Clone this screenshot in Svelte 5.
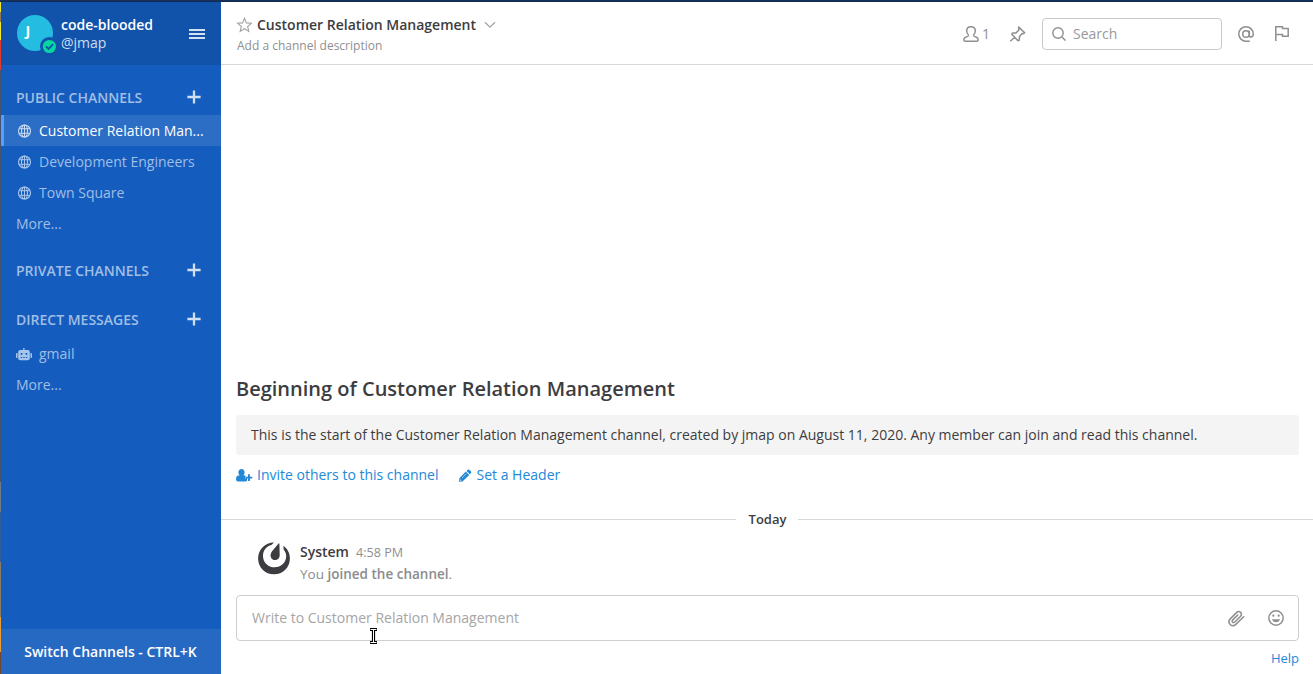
<script>
  const publicChannels = [
    { name: 'Customer Relation Man...', active: true },
    { name: 'Development Engineers', active: false },
    { name: 'Town Square', active: false }
  ];
</script>

{#snippet addIcon()}
  <svg class="add" width="14" height="14" viewBox="0 0 14 14"><path d="M7 .4v13.200M.4 7h13.200" stroke="currentColor" stroke-width="2.300" /></svg>
{/snippet}

<div class="window">
  <div class="topbar"></div>
  <div class="edge"></div>

  <aside class="sidebar">
    <header class="team">
      <svg class="avatar" width="42" height="40" viewBox="0 0 42 40">
        <circle cx="18" cy="18" r="18" fill="#25bce1" />
        <text x="8.4" y="21.400" fill="#fff" font-size="14.500" font-weight="700">J</text>
        <circle cx="32.4" cy="31.5" r="9.4" fill="#1153ab" />
        <circle cx="32.4" cy="31.5" r="6.6" fill="#06d6a0" />
        <path d="M29 31.4l2.500 2.500 4.600-4.700" fill="none" stroke="#1153ab" stroke-width="1.800" />
      </svg>
      <div class="who">
        <div class="teamname">code-blooded</div>
        <div class="username">@jmap</div>
      </div>
      <svg class="menu" width="16" height="10" viewBox="0 0 16 10"><path d="M0 1h16M0 5h16M0 9h16" stroke="#d5e1f1" stroke-width="2" /></svg>
    </header>

    <nav>
      <h4 class="first"><span>PUBLIC CHANNELS</span>{@render addIcon()}</h4>
      {#each publicChannels as channel}
        <div class="row" class:active={channel.active}>
          <svg class="globe" width="14" height="14" viewBox="0 0 14 14" fill="none" stroke="currentColor" stroke-width="1.1">
            <circle cx="7.500" cy="7" r="6" />
            <ellipse cx="7.500" cy="7" rx="3" ry="6" />
            <path d="M7.500 1v12M2.100 4.700h10.800M2.100 9.300h10.800" stroke-width="1" />
          </svg>
          <span class="name">{channel.name}</span>
        </div>
      {/each}
      <div class="row more">More...</div>

      <h4 class="private"><span>PRIVATE CHANNELS</span>{@render addIcon()}</h4>

      <h4 class="direct"><span>DIRECT MESSAGES</span>{@render addIcon()}</h4>
      <div class="row">
        <svg class="globe bot" width="16" height="13" viewBox="0 0 16 13">
          <path fill="currentColor" fill-rule="evenodd" d="M7.200 0h1.300v2H11.700q2.100 0 2.100 2v6.200q0 2-2.100 2H4.300q-2.100 0-2.100-2V4Q2.200 2 4.300 2h2.900zM4.700 5v1.800h1.800V5zM9.500 5v1.800h1.800V5zM4.600 9v1h1.600V9zM7.200 9v1h1.600V9zM9.800 9v1h1.600V9zM0 5.800q0-.8.800-.8h.7v5h-.7Q0 10 0 9.200zM14.500 5h.7q.8 0 .8.8v3.400q0 .8-.8.8h-.7z" />
        </svg>
        <span class="name">gmail</span>
      </div>
      <div class="row more">More...</div>
    </nav>

    <footer class="switch">Switch Channels - CTRL+K</footer>
  </aside>

  <main>
    <header class="channel">
      <div class="about">
        <div class="title">
          <svg width="16" height="16" viewBox="0 0 16 16"><path d="M8.500 1.300l1.900 4.600 5 .4-3.800 3.200 1.200 4.900-4.300-2.700-4.300 2.700 1.200-4.900L1.600 6.300l5-.4z" fill="none" stroke="#a3a3a5" stroke-width="1.100" /></svg>
          <span class="heading">Customer Relation Management</span>
          <svg class="caret" width="12" height="8" viewBox="0 0 12 8"><path d="M1 1.200l5 5 5-5" fill="none" stroke="#a3a3a5" stroke-width="1.300" /></svg>
        </div>
        <div class="description">Add a channel description</div>
      </div>
      <div class="members">
        <svg width="16" height="16" viewBox="0 0 16 16" fill="none" stroke="currentColor" stroke-width="1.500">
          <path d="M5.700 9.300C4.300 8 3.600 6.300 3.700 4.600 3.800 2.200 5.500.8 8 .8s4.200 1.400 4.300 3.800c.1 1.700-.6 3.400-2 4.700M5.700 9.300c-.2 1-1.700 1.300-3.200 2C1.400 11.800.9 12.700.9 14q0 1.200 1.200 1.200h11.800q1.200 0 1.200-1.200c0-1.300-.5-2.200-1.600-2.700-1.500-.7-3-1-3.200-2" />
        </svg>
        <span>1</span>
      </div>
      <svg class="pin" width="17" height="16" viewBox="0 0 17 16" fill="none" stroke="#8f8f91" stroke-width="1.500" stroke-linejoin="round">
        <path d="M9.700 1.100l6 5.700-1.400.9-1.200-.1-2.600 2.900-.2 3.600-1.300.6-6.300-6.400.8-1.200 3.500-.2 2.800-2.700-.2-1.900zM5.700 11.200L1.300 15.300" />
      </svg>
      <div class="search">
        <svg width="14" height="14" viewBox="0 0 14 14"><path d="M10.200 10.200L13.500 13.500" stroke="#8f8f91" stroke-width="1.500" /><circle cx="6" cy="6" r="5.200" fill="none" stroke="#8f8f91" stroke-width="1.400" /></svg>
        <span>Search</span>
      </div>
      <svg class="at" width="16" height="16" viewBox="0 0 16 16" fill="none" stroke="#8f8f91" stroke-width="1.500">
        <circle cx="8" cy="8" r="3.300" />
        <path d="M11.300 4.400v4.800c0 1.200.7 1.800 1.700 1.800 1.500 0 2.200-1.300 2.200-3C15.200 4 12.200.8 8 .8S.8 4 .8 8 4 15.200 8 15.200h3.800" />
      </svg>
      <svg class="flag" width="14" height="15" viewBox="0 0 14 15" fill="none" stroke="#8f8f91" stroke-width="1.500">
        <path d="M.8 15V.8h6.700v1.700h5.700v7.700H7.500V8.600H.8" />
      </svg>
    </header>

    <section class="intro">
      <h1>Beginning of Customer Relation Management</h1>
      <p>This is the start of the Customer Relation Management channel, created by jmap on August 11, 2020. Any member can join and read this channel.</p>
      <div class="links">
        <svg width="16" height="13" viewBox="0 0 16 13"><path fill="currentColor" d="M5.500 0C7.300 0 8.600 1.300 8.600 3.200 8.600 4.700 7.900 5.800 7.200 6.400L8.600 6.300Q9.200 6.300 9.500 6.800V9.500H11v2.300Q10.300 12.400 9.300 12.400H1.700Q0 12.400 0 10.600C0 8.500.6 6.500 2.200 6.400L3.800 6.400C3 5.800 2.400 4.700 2.400 3.200 2.400 1.300 3.700 0 5.500 0zM12 5.200h1.900v2.500H16.300v1.900h-2.400v2.500H12V9.600H10V7.700h2z" /></svg>
        <span class="invite">Invite others to this channel</span>
        <svg width="13" height="13" viewBox="0 0 13 13"><path fill="currentColor" d="M8.700.8q.8-.8 1.600 0l1.700 1.700q.8.800 0 1.600L10.800 5.300 7.500 2zM6.800 2.600l3.400 3.400-6.700 6.500L0 12.800l.4-3.600zM1.200 10.200l-.2 1.500 1.500-.2z" fill-rule="evenodd" /><path d="M3 9l4.300-4.300" stroke="#fff" stroke-width=".5" /></svg>
        <span class="set">Set a Header</span>
      </div>
    </section>

    <div class="today"><i></i><span>Today</span><i></i></div>

    <article>
      <svg class="logo" width="32" height="33" viewBox="0 0 32 33">
        <path fill="#3d3c40" d="M16 .5C7 .6.100 7.600.100 16.400c0 9 7 15.900 15.900 15.900s15.900-7 15.900-15.900c0-5.400-2.500-9.900-6.500-12.700l.2 3.700c1.900 2.200 2.700 4.500 2.600 7.200-.2 6.400-5.300 10.700-11.500 10.700C10 25.300 5 20.300 5 13.900 5 8.200 8.500 4.200 13.700 2.700z" />
        <path fill="#3d3c40" d="M20.800 1.300q.5-.1.600.4l.3 11.200c.1 3-2.100 5.200-4.800 5.100-3-.1-4.900-2.900-4.200-5.800.4-1.600 1.100-2.500 2-3.700z" />
      </svg>
      <div class="post">
        <div class="sender"><b>System</b><time>4:58 PM</time></div>
        <div class="message">You <b>joined the channel</b>.</div>
      </div>
    </article>

    <div class="composer">
      <span>Write to Customer Relation Management</span>
      <svg class="clip" width="17" height="17" viewBox="0 0 17 17" fill="none" stroke="#8f8f91" stroke-width="1.500" stroke-linecap="round">
        <path d="M15.700 6.800l-7.600 7.300c-2 1.900-4.400 1.900-5.900.4-1.600-1.600-1.600-4 .3-5.900l6-6c1.300-1.300 3-1.300 4.100-.2s1.100 2.800-.2 4.100l-5.600 5.500c-.8.800-1.600.8-2.200.2s-.6-1.500.2-2.300l4.900-4.800" />
      </svg>
      <svg width="16" height="16" viewBox="0 0 16 16"><circle cx="8" cy="8" r="7.200" fill="none" stroke="#8f8f91" stroke-width="1.500" /><circle cx="5.300" cy="5.700" r="1.100" fill="#8f8f91" /><circle cx="10.700" cy="5.700" r="1.100" fill="#8f8f91" /><path d="M4 9.300h8c-.5 2-2 3-4 3s-3.500-1-4-3z" fill="#8f8f91" /></svg>
    </div>
    <div class="help">Help</div>
  </main>

  <svg class="cursor" width="9" height="18" viewBox="0 0 9 18">
    <path d="M1 2.500h7M4.500 2.500v13M1 15.500h7" fill="none" stroke="#000" stroke-width="3.200" />
    <path d="M1.500 2.500h6M4.500 2.500v13M1.500 15.500h6" fill="none" stroke="#fff" stroke-width="1" />
  </svg>
</div>

<style>
  :global(body) { margin: 0; background: #fff; }
  .window {
    position: relative;
    display: grid;
    grid-template: 2px 672px / 1px 220px 1092px;
    width: 1313px;
    height: 674px;
    overflow: hidden;
    font: 14px/20px 'Open Sans', sans-serif;
    color: #3d3c40;
    white-space: nowrap;
  }
  svg { display: block; flex: none; }
  .topbar { grid-column: 1 / 4; background: linear-gradient(#18345f, #0e2850); }
  .edge { background: linear-gradient(#f5e628 0 10px, #8d7a50 10px 20px, #f5e628 20px 38px, #e23a2d 38px 68px, #44536e 68px 480px, #737a82 480px 510px, #315e97 510px 560px, #8c7b61 560px 615px, #eb9c31 615px 650px, #754432 650px); }

  .sidebar { display: flex; flex-direction: column; background: #145dbf; color: #a1bee5; }
  .team { display: flex; box-sizing: border-box; height: 63px; padding: 13px 0 0 16px; background: #1153ab; }
  .who { width: 128px; margin-left: 2px; }
  .teamname { color: #fff; font-weight: 600; line-height: 18px; margin-top: 1px; }
  .username { color: #cfddee; line-height: 18px; }
  .menu { margin-top: 14px; }
  nav { flex: 1; }
  h4 { display: flex; align-items: center; justify-content: space-between; height: 20px; margin: 0; padding: 0 20px 0 15px; font-size: 14px; font-weight: 600; }
  .add { margin-top: -2px; color: #d0dff2; }
  .first { margin: 23px 0 7px; }
  .private { margin: 22px 0 29px; }
  .direct { margin-bottom: 8px; }
  .row { display: flex; align-items: center; box-sizing: border-box; height: 31px; padding-left: 16px; }
  .row.more { padding-left: 15px; }
  .row.active { color: #fff; background: #2c6dc5; box-shadow: inset 3px 0 #579eff; }
  .globe { width: 14px; margin-right: 8px; color: #a8c5eb; }
  .active .globe { color: #c7daf3; }
  .bot { width: 16px; margin: 2px 7px 0 -1px; }
  .switch { height: 45px; padding-right: 1px; background: #2669c3; color: #fff; font-weight: 600; line-height: 45px; text-align: center; }

  main { display: flex; flex-direction: column; background: #fff; }
  .channel { display: flex; align-items: center; box-sizing: border-box; height: 63px; border-bottom: 1px solid #d8d8d9; padding: 0 24px 0 16px; color: #8f8f91; }
  .about { flex: 1; }
  .title { display: flex; align-items: center; height: 20px; margin-top: 5px; }
  .title > svg:first-child { margin-left: -1px; }
  .heading { margin-left: 5px; color: #3d3c40; font-size: 14px; font-weight: 600; }
  .caret { margin-left: 8px; }
  .description { font-size: 12px; line-height: 21px; }
  .members { display: flex; align-items: center; gap: 4px; margin-top: 2px; }
  .members svg { margin-right: -1px; }
  .pin { margin: 1px 16px 0 19px; }
  .search { display: flex; align-items: center; gap: 7px; box-sizing: border-box; width: 180px; height: 32px; margin-top: 2px; padding-left: 9px; border: 1px solid #c9c9ca; border-radius: 4px; color: #999; }
  .at { margin: 2px 21px 0 16px; }
  .flag { margin-top: 1px; }

  .intro { padding: 310px 14px 0 15px; }
  h1 { height: 28px; margin: 0; font-size: 20px; line-height: 28px; font-weight: 600; }
  p { height: 40px; margin: 12px 0 10px; padding-left: 15px; border-radius: 3px; background: #f4f4f4; line-height: 40px; }
  .links { display: flex; align-items: center; height: 20px; color: #2389d7; }
  .links svg { overflow: visible; }
  .invite { margin: 0 20px 0 5px; }
  .set { margin-left: 5px; }
  .today { display: flex; align-items: center; height: 20px; margin-top: 24px; font-size: 13px; font-weight: 600; }
  .today i { flex: 1; height: 1px; background: #d8d8d9; }
  .today span { padding: 0 12px 0 13px; }
  article { display: flex; height: 44px; padding: 12px 0 0 37px; }
  .logo { margin: 1px 10px 0 0; }
  .post { padding-top: 1px; }
  .sender { display: flex; height: 22px; }
  .sender time { margin: 1px 0 0 7px; color: #8f8f91; font-size: 12.600px; }
  b { font-weight: 600; }
  .message { color: #8b8b8d; font-size: 13.500px; }
  .composer { display: flex; align-items: center; box-sizing: border-box; height: 46px; margin: 10px 14px 0 15px; padding: 0 14px 0 15px; border: 1px solid #cececf; border-radius: 4px; color: #a5a5a6; }
  .clip { margin: 0 23px 0 auto; }
  .help { margin: 7px 14px 0; color: #2389d7; font-size: 13px; text-align: right; }
  .cursor { position: absolute; left: 369px; top: 627px; }
</style>
